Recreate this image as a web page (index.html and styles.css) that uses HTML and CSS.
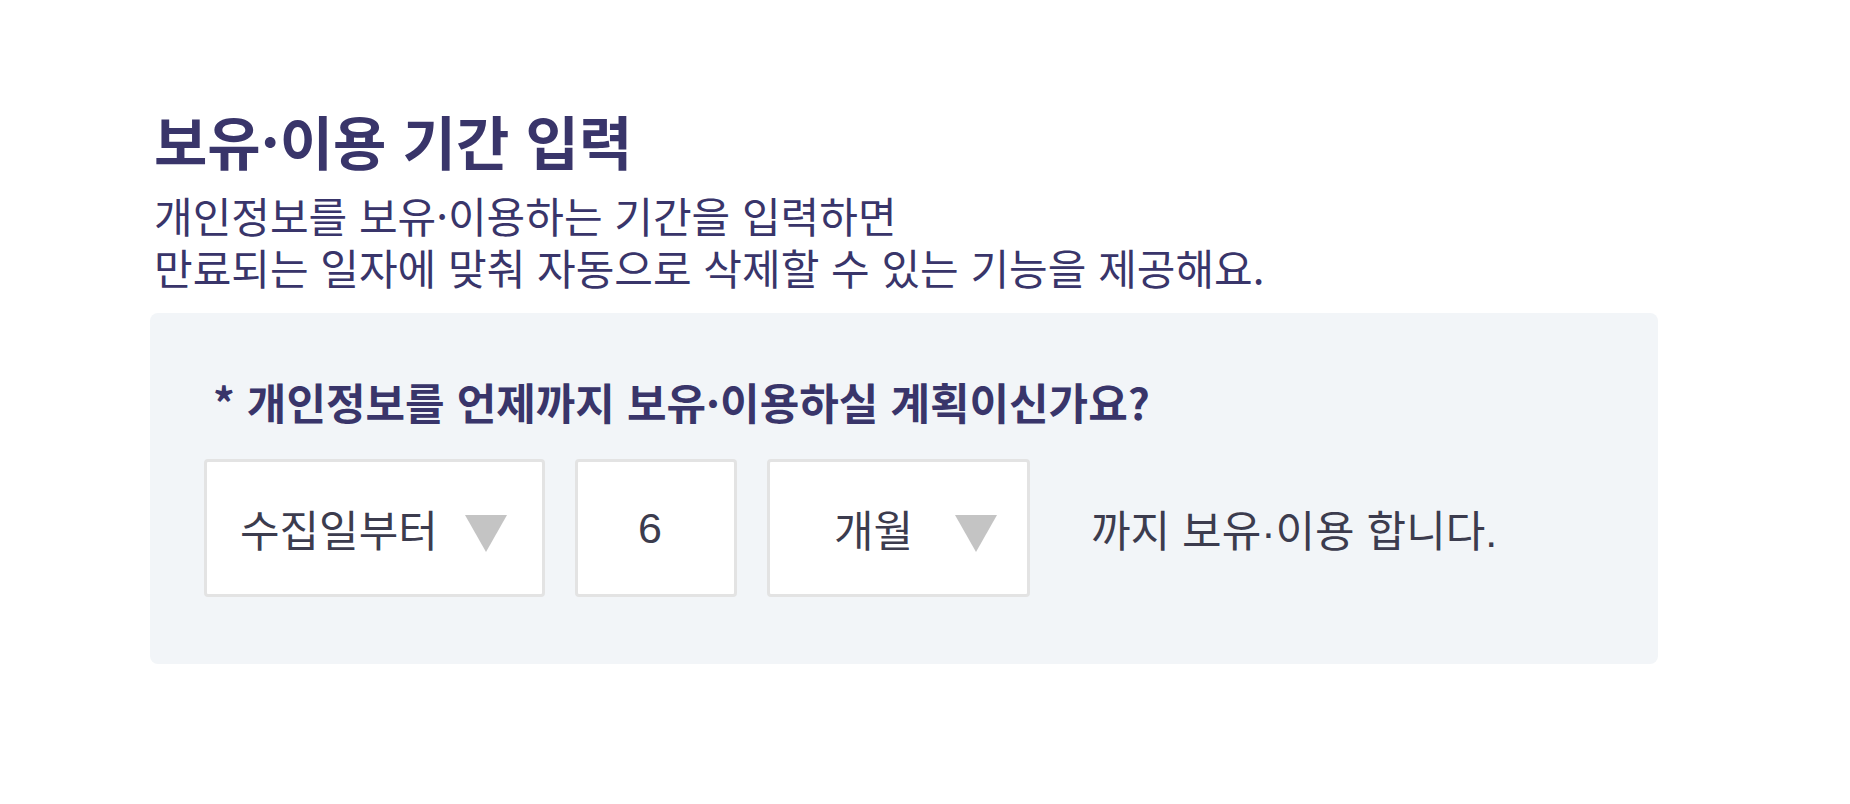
FILE: index.html
```html
<!DOCTYPE html>
<html lang="ko">
<head>
    <meta charset="UTF-8">
    <meta name="viewport" content="width=device-width, initial-scale=1.0">
    <title>보유·이용 기간 입력</title>
    <link rel="stylesheet" href="styles.css">
</head>
<body>
    <div class="wrap">
        <section class="intro">
            <h1>보유·이용 기간 입력</h1>
            <p>
                <span class="line">개인정보를 보유·이용하는 기간을 입력하면</span>
                <span class="line">만료되는 일자에 맞춰 자동으로 삭제할 수 있는 기능을 제공해요.</span>
            </p>
        </section>
        <section class="panel">
            <div class="question">* 개인정보를 언제까지 보유·이용하실 계획이신가요?</div>
            <div class="period-row">
                <div class="select select-start">
                    <span>수집일부터</span>
                    <svg class="caret" width="42" height="37" viewBox="0 0 42 37"><polygon points="0,0 42,0 21,37" fill="#c4c4c4"/></svg>
                </div>
                <div class="count">6</div>
                <div class="select select-unit">
                    <span>개월</span>
                    <svg class="caret" width="42" height="37" viewBox="0 0 42 37"><polygon points="0,0 42,0 21,37" fill="#c4c4c4"/></svg>
                </div>
                <div class="tail">까지 보유·이용 합니다.</div>
            </div>
        </section>
    </div>
</body>
</html>
```
FILE: styles.css
```css
body {
    margin: 0;
    background: #fff;
    font-family: "Noto Sans CJK KR", "Noto Sans", sans-serif;
}
.wrap {
    width: 1508px;
    margin-left: 150px;
    padding-top: 104px;
}
.intro {
    padding-left: 4px;
    color: #39356a;
}
.intro h1 {
    margin: 0;
    font-size: 58px;
    font-weight: 700;
    line-height: 72px;
}
.intro p {
    margin: 13px 0 0 0;
    font-size: 42px;
    line-height: 52px;
}
.intro .line {
    display: block;
    height: 52px;
}
.panel {
    margin-top: 20px;
    background: #f2f5f8;
    border-radius: 8px;
    padding: 60px 54px 67px 54px;
}
.question {
    margin-left: 9px;
    color: #39356a;
    font-size: 43px;
    font-weight: 700;
    line-height: 56px;
}
.period-row {
    display: flex;
    align-items: center;
    margin-top: 30px;
    font-family: "Liberation Sans", "Noto Sans CJK KR", sans-serif;
    font-size: 43px;
    color: #3c3c4e;
}
.select, .count {
    box-sizing: border-box;
    height: 138px;
    background: #fff;
    border: 3px solid #e3e3e3;
    border-radius: 4px;
    display: flex;
    align-items: center;
}
.select {
    justify-content: space-between;
}
.select-start {
    width: 341px;
    padding: 0 35px 0 33px;
}
.count {
    width: 162px;
    margin-left: 30px;
    padding-right: 12px;
    justify-content: center;
}
.select-unit {
    width: 263px;
    margin-left: 30px;
    padding: 0 30px 0 64px;
}
.caret {
    display: block;
    margin-top: 10px;
}
.tail {
    margin-left: 61px;
}
```
